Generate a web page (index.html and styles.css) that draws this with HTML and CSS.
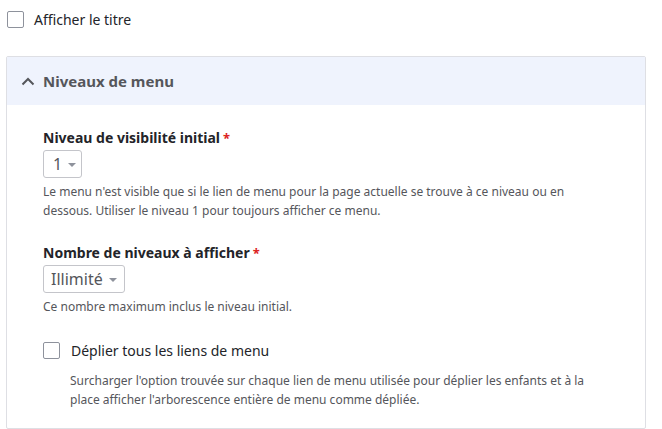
FILE: index.html
```html
<!DOCTYPE html>
<html lang="fr">
<head>
<meta charset="utf-8">
<link rel="stylesheet" href="styles.css">
</head>
<body>
<div class="page">
  <label class="check-row top-check">
    <span class="checkbox"></span>
    <span class="check-label">Afficher le titre</span>
  </label>

  <div class="details">
    <div class="summary">
      <svg class="chev" width="14" height="9" viewBox="0 0 14 9"><path d="M1.5 7.5 L7 2 L12.5 7.5" fill="none" stroke="#55565b" stroke-width="2"/></svg>
      <span class="summary-title">Niveaux de menu</span>
    </div>
    <div class="details-body">
      <div class="field">
        <div class="label">Niveau de visibilité initial<span class="req">*</span></div>
        <div class="select select-small"><span>1</span><span class="caret"></span></div>
        <div class="desc">Le menu n'est visible que si le lien de menu pour la page actuelle se trouve à ce niveau ou en dessous. Utiliser le niveau 1 pour toujours afficher ce menu.</div>
      </div>
      <div class="field field-2">
        <div class="label">Nombre de niveaux à afficher<span class="req">*</span></div>
        <div class="select"><span>Illimité</span><span class="caret"></span></div>
        <div class="desc">Ce nombre maximum inclus le niveau initial.</div>
      </div>
      <div class="field field-3">
        <label class="check-row">
          <span class="checkbox"></span>
          <span class="check-label">Déplier tous les liens de menu</span>
        </label>
        <div class="desc desc-indent">Surcharger l'option trouvée sur chaque lien de menu utilisée pour déplier les enfants et à la place afficher l'arborescence entière de menu comme dépliée.</div>
      </div>
    </div>
  </div>
</div>
</body>
</html>
```

FILE: styles.css
```css
html, body {
  margin: 0;
  padding: 0;
  background: #ffffff;
}
body {
  font-family: "Noto Sans", "DejaVu Sans", sans-serif;
  color: #232429;
}
.page {
  padding: 11px 16px 0 6px;
}
.check-row {
  display: flex;
  align-items: center;
  gap: 10px;
}
.top-check {
  padding-left: 1px;
  height: 17px;
}
.checkbox {
  box-sizing: border-box;
  width: 17px;
  height: 17px;
  border: 1px solid #8e929c;
  border-radius: 2px;
  background: #fff;
  flex: none;
}
.check-label {
  font-size: 14px;
  line-height: 17px;
  color: #232429;
}
.details {
  margin-top: 28px;
  border: 1px solid #dedfe4;
  border-radius: 2px;
  width: 638px;
}
.summary {
  background: #eff3fd;
  height: 48px;
  display: flex;
  align-items: center;
  padding-left: 14px;
}
.chev {
  margin-right: 8px;
  margin-top: 1px;
}
.summary-title {
  font-size: 15px;
  font-weight: 700;
  color: #55565b;
}
.details-body {
  padding: 23px 20px 19px 36px;
}
.label {
  font-size: 14px;
  font-weight: 700;
  line-height: 20px;
  color: #232429;
}
.req {
  color: #dc2323;
  margin-left: 3px;
  font-size: 13px;
}
.select {
  box-sizing: border-box;
  margin-top: 2px;
  height: 28px;
  display: inline-flex;
  align-items: center;
  gap: 6px;
  padding: 0 7px 0 7px;
  border: 1px solid #c4c5ca;
  border-radius: 3px;
  font-size: 16px;
  color: #55565b;
}
.select-small {
  width: 39px;
  padding-left: 9px;
}
.caret {
  width: 0;
  height: 0;
  border-left: 4px solid transparent;
  border-right: 4px solid transparent;
  border-top: 4px solid #8e929c;
  margin-top: 1px;
}
.desc {
  margin-top: 4px;
  font-size: 12px;
  line-height: 19px;
  color: #55565b;
  max-width: 560px;
}
.field-2 {
  margin-top: 23px;
}
.field-3 {
  margin-top: 26px;
}
.field-3 .check-row {
  gap: 11px;
}
.desc-indent {
  margin-top: 12px;
  padding-left: 27px;
  max-width: 525px;
}
```
